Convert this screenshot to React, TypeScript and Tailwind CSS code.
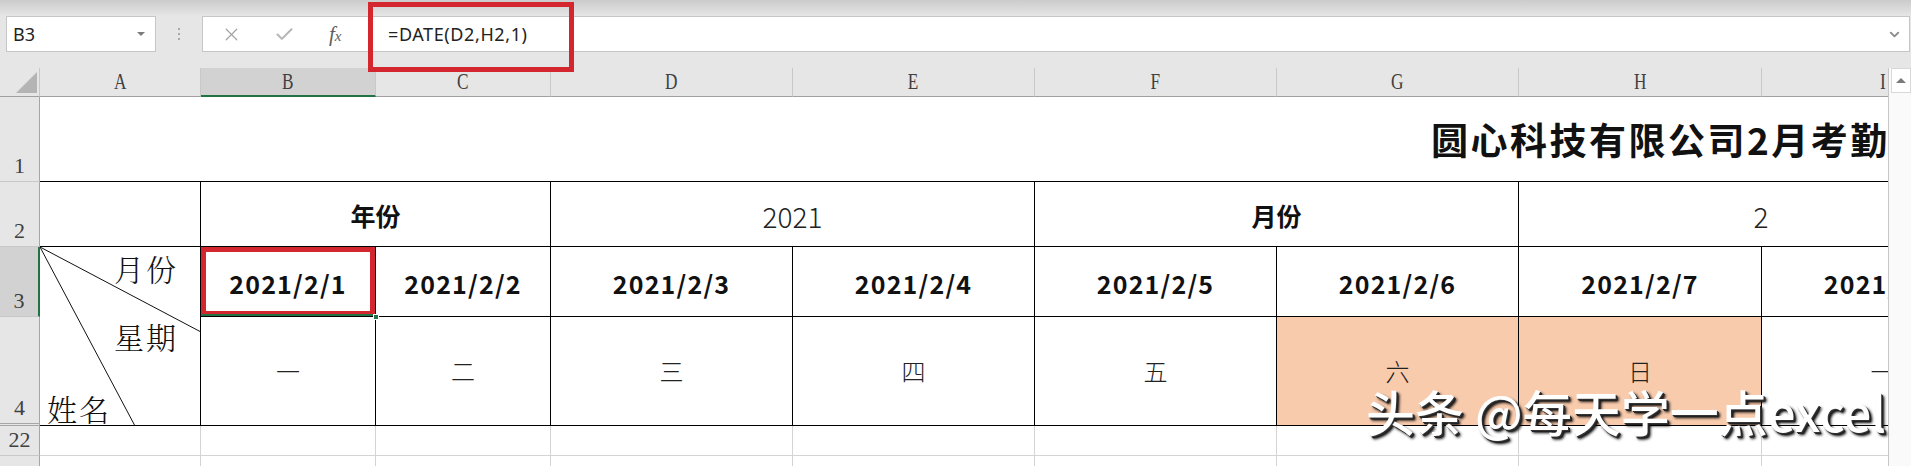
import { X, Check, ChevronDown } from "lucide-react";

const COLS = ["A", "B", "C", "D", "E", "F", "G", "H", "I"];
const DATES = ["2021/2/1", "2021/2/2", "2021/2/3", "2021/2/4", "2021/2/5", "2021/2/6", "2021/2/7", "2021/2/8"];
const WEEK = ["一", "二", "三", "四", "五", "六", "日", "一"];

function RowHead({ n, active = false, double = false }: { n: string; active?: boolean; double?: boolean }) {
  return (
    <div
      className={`flex items-end justify-center pb-[4px] font-['Liberation_Serif',serif] text-[22px] leading-none text-[#404040] ${
        active ? "bg-[#d2d2d2] border-r-2 border-r-[#217346]" : "bg-[#e6e6e6] border-r border-r-[#a6a6a6]"
      } ${double ? "border-b-[3px] border-double border-b-[#a6a6a6]" : "border-b border-b-[#c8c8c8]"}`}
    >
      {n}
    </div>
  );
}

function FormulaBar() {
  return (
    <div className="flex h-9 items-stretch">
      <div className="ml-[6px] flex w-[150px] items-center justify-between border border-[#c6c6c6] bg-white pl-[6px] pr-[10px] font-['Noto_Sans',sans-serif] text-[18px] text-[#222]">
        <span>B3</span>
        <span className="h-0 w-0 border-x-[4px] border-t-[4px] border-x-transparent border-t-[#7c7c7c]" />
      </div>
      <div className="flex w-[46px] flex-col items-center justify-center gap-[3px]">
        <span className="h-[2px] w-[2px] bg-[#a8a8a8]" />
        <span className="h-[2px] w-[2px] bg-[#a8a8a8]" />
        <span className="h-[2px] w-[2px] bg-[#a8a8a8]" />
      </div>
      <div className="mr-px flex flex-1 items-center border border-[#c6c6c6] bg-white">
        <div className="flex w-[164px] items-center">
          <X className="ml-[18px] text-[#a3a3a3]" size={21} strokeWidth={1.4} />
          <Check className="ml-[32px] text-[#b7b7b7]" size={21} strokeWidth={2.4} />
          <span className="ml-[34px] font-['Liberation_Serif',serif] text-[21px] italic leading-none text-[#5e5e5e]">
            f<span className="text-[15px]">x</span>
          </span>
        </div>
        <span className="ml-[21px] font-['Noto_Sans',sans-serif] text-[18px] tracking-[0.6px] text-[#222]">=DATE(D2,H2,1)</span>
        <ChevronDown className="ml-auto mr-[7px] text-[#8a8a8a]" size={15} strokeWidth={3} />
      </div>
    </div>
  );
}

export default function App() {
  const cjk = "font-['Noto_Sans_CJK_SC','Noto_Sans_CJK_JP',sans-serif]";
  return (
    <div className="relative h-[466px] w-[1911px] overflow-hidden bg-[#e6e6e6]">
      <div className="h-4 bg-gradient-to-b from-[#cbcbcb] to-[#e6e6e6]" />
      <FormulaBar />
      <div className="h-4" />

      <div className="flex">
        <div className="w-[1888px] overflow-hidden">
          <div className="grid w-[2004px] grid-cols-[40px_161px_175px_175px_242px_242px_242px_242px_243px_242px] grid-rows-[29px_85px_65px_70px_109px_30px_30px] bg-white">
            {/* column headers */}
            <div className="relative border-b border-r border-b-[#a0a0a0] border-r-[#c8c8c8] bg-[#e6e6e6]">
              <svg className="absolute left-[16px] top-[4px]" width="22" height="22" viewBox="0 0 22 22">
                <polygon points="21,0 21,21 0,21" fill="#b4b4b4" />
              </svg>
            </div>
            {COLS.map((c) =>
              c === "B" ? (
                <div
                  key={c}
                  className="flex items-end justify-center border-b-2 border-r border-b-[#217346] border-r-[#c8c8c8] bg-[#d2d2d2] pb-[2px] font-['Liberation_Serif',serif] text-[23px] leading-none text-[#404040]"
                >
                  <span className="inline-block scale-x-75">{c}</span>
                </div>
              ) : (
                <div
                  key={c}
                  className="flex items-end justify-center border-b border-r border-b-[#a0a0a0] border-r-[#c8c8c8] bg-[#e6e6e6] pb-[3px] font-['Liberation_Serif',serif] text-[23px] leading-none text-[#404040]"
                >
                  <span className="inline-block scale-x-75">{c}</span>
                </div>
              )
            )}

            {/* row 1 title */}
            <RowHead n="1" />
            <div className={`col-span-9 flex items-center overflow-hidden whitespace-nowrap border-b border-black pl-[1391px] pt-[2px] text-[37px] font-bold tracking-[2.5px] text-[#111] ${cjk}`}>
              圆心科技有限公司2月考勤表
            </div>

            {/* row 2 */}
            <RowHead n="2" />
            <div className="border-b border-r border-black" />
            <div className={`col-span-2 flex items-center justify-center border-b border-r border-black pt-[4px] text-[25px] font-bold text-[#111] ${cjk}`}>
              年份
            </div>
            <div className={`col-span-2 flex items-center justify-center border-b border-r border-black pt-[4px] text-[28px] font-light text-[#222] ${cjk}`}>
              2021
            </div>
            <div className={`col-span-2 flex items-center justify-center border-b border-r border-black pt-[4px] text-[25px] font-bold text-[#111] ${cjk}`}>
              月份
            </div>
            <div className={`col-span-2 flex items-center justify-center border-b border-r border-black pt-[4px] text-[28px] font-light text-[#222] ${cjk}`}>
              2
            </div>

            {/* row 3 */}
            <RowHead n="3" active />
            <div className="relative row-span-2 border-b border-r border-black">
              <svg className="absolute inset-0" width="161" height="179" viewBox="0 0 161 179">
                <line x1="0" y1="0" x2="161" y2="85" stroke="#111" strokeWidth="1" />
                <line x1="0" y1="0" x2="95" y2="179" stroke="#111" strokeWidth="1" />
              </svg>
              <div className="relative flex h-full flex-col pb-[2px] pt-[6px] font-['Noto_Serif_CJK_SC','Noto_Sans_CJK_SC',serif] text-[30px] font-light leading-none text-[#111]">
                <span className="mr-[22px] self-end tracking-[2px]">月份</span>
                <span className="mr-[22px] mt-[38px] self-end tracking-[2px]">星期</span>
                <span className="ml-[7px] mt-auto tracking-[2px]">姓名</span>
              </div>
            </div>
            {DATES.map((d, i) => (
              <div
                key={d}
                className={`relative flex items-center justify-center overflow-hidden whitespace-nowrap border-b border-r border-black pt-[4px] text-[25px] font-bold tracking-[1.2px] text-[#111] ${cjk}`}
              >
                {d}
                {i === 0 && (
                  <>
                    <div className="absolute inset-0 border-[5px] border-[#d3262f]" />
                    <div className="absolute bottom-0 left-0 h-[2px] w-full bg-[#217346]" />
                  </>
                )}
              </div>
            ))}

            {/* row 4 */}
            <RowHead n="4" double />
            {WEEK.map((w, i) =>
              i === 5 || i === 6 ? (
                <div key={i} className={`flex items-center justify-center border-b border-r border-black bg-[#f8cbad] text-[24px] font-light text-[#222] ${cjk}`}>
                  {w}
                </div>
              ) : (
                <div key={i} className={`flex items-center justify-center border-b border-r border-black text-[24px] font-light text-[#222] ${cjk}`}>
                  {w}
                </div>
              )
            )}

            {/* row 22 */}
            <RowHead n="22" />
            {COLS.map((c) => (
              <div key={c} className="border-b border-r border-[#d4d4d4]" />
            ))}

            {/* row 23, its number lies below the window */}
            <RowHead n="" />
            {COLS.map((c) => (
              <div key={c} className="border-b border-r border-[#d4d4d4]" />
            ))}
          </div>
        </div>

        {/* vertical scrollbar */}
        <div className="flex-1 border-l border-[#c6c6c6] bg-[#fafafa] pl-[2px]">
          <div className="flex h-[25px] items-center justify-center border border-[#d8d8d8] bg-white">
            <span className="h-0 w-0 border-x-[5px] border-b-[5px] border-x-transparent border-b-[#7a7a7a]" />
          </div>
        </div>
      </div>

      {/* green fill handle of the selection */}
      <div className="absolute left-[373px] top-[314px] h-[6px] w-[6px] border border-white bg-[#217346]" />

      {/* red annotation round the formula */}
      <div className="absolute left-[368px] top-[2px] h-[70px] w-[206px] border-[5px] border-[#d3262f]" />

      {/* watermark */}
      <div
        className={`absolute left-[1366px] top-[386px] whitespace-nowrap text-[49px] font-medium leading-none text-white [text-shadow:1px_1px_0_#333,2px_2px_0_#222,3px_3px_3px_#000] ${cjk}`}
      >
        头条 @每天学一点excel
      </div>
    </div>
  );
}
